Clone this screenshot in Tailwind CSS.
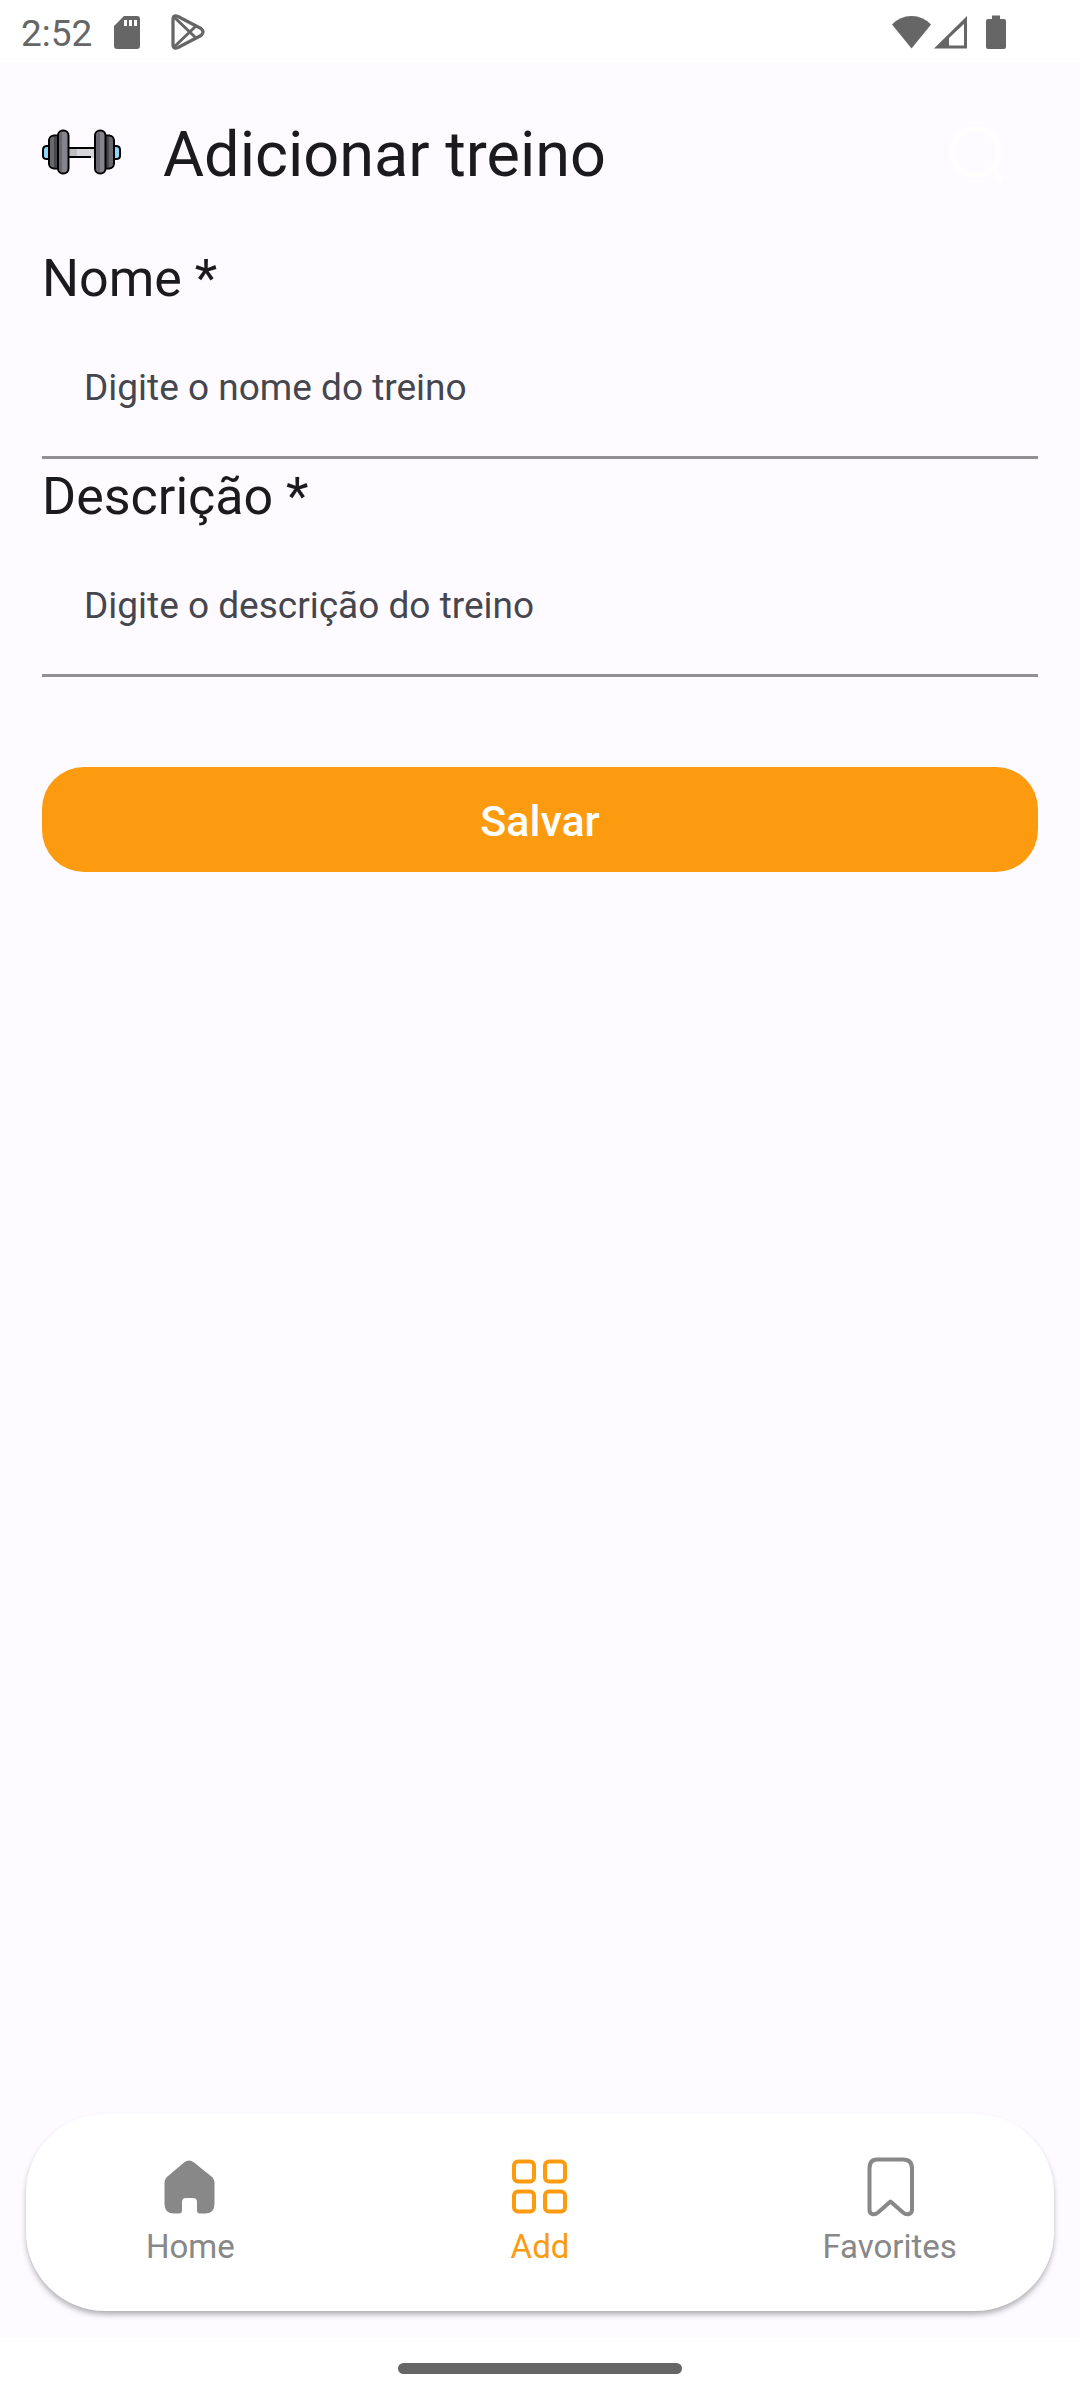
<!DOCTYPE html>
<html lang="pt-BR">
<head>
<meta charset="utf-8">
<meta name="viewport" content="width=device-width, initial-scale=1">
<title>Adicionar treino</title>
<script src="https://cdn.jsdelivr.net/npm/@tailwindcss/browser@4"></script>
</head>
<body class="flex min-h-screen flex-col bg-[#fdfbff] font-[Roboto,sans-serif] text-[#1b1b1f]">

  <!-- System status bar -->
  <div class="flex h-[63px] shrink-0 items-center justify-between bg-white pr-[74px] pl-[21px] text-[#666666]">
    <div class="flex items-center">
      <span class="pt-1 text-[37px] leading-[59px]">2:52</span>
      <svg class="ml-[22px] h-[34px] w-[26px]" viewBox="0 0 26 34" aria-hidden="true">
        <path fill="currentColor" fill-rule="evenodd" d="M10 1H23a3 3 0 0 1 3 3V31a3 3 0 0 1-3 3H3a3 3 0 0 1-3-3V11ZM10 5v6h3V5ZM15 5v6h3V5ZM20 5v6h3V5Z"/>
      </svg>
      <svg class="ml-[31px] h-[36px] w-[34px]" viewBox="0 0 34 36" fill="none" stroke="currentColor" stroke-width="3.2" stroke-linejoin="round" aria-hidden="true">
        <path d="M2 4.500V31.500Q2.500 35.500 7 33.500L30 21.500Q34 18 30 14.500L7 2.500Q2.500 0.500 2 4.500Z"/>
        <path d="M3 3L25 24M3 33L25 12" stroke-width="3"/>
      </svg>
    </div>
    <div class="flex items-center">
      <svg class="h-[34px] w-[39px]" viewBox="0 0 39 34" aria-hidden="true"><path fill="currentColor" d="M0 9.500Q8 1 19.500 1T39 9.500L19.500 33.500Z"/></svg>
      <svg class="ml-[3px] h-[34px] w-[33px]" viewBox="0 0 33 34" aria-hidden="true"><path fill="currentColor" fill-rule="evenodd" d="M0 33.500L33 1V33.500ZM15 23V30.500H30V9Z"/></svg>
      <svg class="ml-[19px] h-[34px] w-[20px]" viewBox="0 0 20 34" aria-hidden="true"><path fill="currentColor" d="M6 0.500H14V4H18a2 2 0 0 1 2 2V32a2 2 0 0 1-2 2H2a2 2 0 0 1-2-2V6a2 2 0 0 1 2-2H6Z"/></svg>
    </div>
  </div>

  <header class="flex items-center px-[42px] pt-[26px]">
    <svg class="h-[46px] w-[79px] shrink-0" viewBox="0 0 79 46" stroke="#000" stroke-width="2" stroke-linejoin="round" aria-hidden="true">
      <path fill="#8fd6f9" d="M8 17H5Q1 17 1 21V27Q1 30 5 30H8ZM71 17H74Q78 17 78 21V27Q78 30 74 30H71Z"/>
      <path d="M26 19H53V28H26Z" fill="#d6d6da"/>
      <path d="M27 20h8v7h-8z" fill="#bdbdc2" stroke="none"/>
      <path d="M49 28H52" stroke="#d6d6da"/>
      <rect x="7" y="6.500" width="16" height="33" rx="5" fill="#69686f"/>
      <path d="M12 8h4v30h-4z" fill="#47464c" stroke="none"/>
      <rect x="56" y="6.500" width="16" height="33" rx="5" fill="#69686f"/>
      <path d="M64 8h3v30h-3z" fill="#47464c" stroke="none"/>
      <rect x="16" y="1.500" width="10.500" height="43" rx="5" fill="#85848c"/>
      <path d="M17 7v32q0 3 3 4V3q-3 1-3 4" fill="#69686f" stroke="none"/>
      <rect x="53" y="1.500" width="10.500" height="43" rx="5" fill="#85848c"/>
      <path d="M54 7v32q0 3 4 4V3q-4 1-4 4" fill="#69686f" stroke="none"/>
    </svg>
    <h1 class="ml-[42px] flex-1 pt-1.5 text-[63px] leading-[84px]">Adicionar treino</h1>
    <button type="button" aria-label="Pesquisar" class="flex size-[126px] items-center justify-center text-white">
      <svg class="size-[63px]" viewBox="0 0 63 63" fill="none" stroke="currentColor" stroke-width="4.500" stroke-linecap="round">
        <circle cx="31.500" cy="31" r="23.500"/><path d="M48 48L57 58"/>
      </svg>
    </button>
  </header>

  <main class="flex-1 px-[42px] pt-[26px]">
    <form>
      <label for="nome" class="block pt-px text-[52px] leading-[74px]">Nome *</label>
      <input id="nome" type="text" placeholder="Digite o nome do treino" class="block h-[143px] w-full border-b-3 border-[#918f94] bg-transparent px-[42px] pt-[3px] text-[37px] outline-none placeholder:text-[#46464f]">
      <label for="descricao" class="block pt-px text-[52px] leading-[74px]">Descrição *</label>
      <input id="descricao" type="text" placeholder="Digite o descrição do treino" class="block h-[143px] w-full border-b-3 border-[#918f94] bg-transparent px-[42px] pt-[3px] text-[37px] outline-none placeholder:text-[#46464f]">
      <button type="button" class="mt-[90px] h-[105px] w-full rounded-[42px] bg-[#fd9b10] pt-1 text-[43px] font-medium text-white">Salvar</button>
    </form>
  </main>

  <nav class="mx-[26px] mb-[26px] grid h-[197px] grid-cols-3 gap-[21px] rounded-[79px] bg-white text-[33px] leading-[42px] text-[#888888] shadow-[0_4px_6px_-1px_rgba(0,0,0,0.35)]">
    <a href="#home" class="flex flex-col items-center gap-2 pt-[41px]">
      <svg class="size-[63px]" viewBox="1 0 63 63" aria-hidden="true"><path fill="currentColor" d="M26 7.500Q31 3.500 36 7.500L53.500 21.500Q56.500 24 56.500 28V49Q56.500 58.500 47 58.500H42Q39 58.500 39 55.500V47Q39 43 35 43H28Q24 43 24 47V55.500Q24 58.500 21 58.500H16Q6.500 58.500 6.500 49V28Q6.500 24 9.500 21.500Z"/></svg>
      <span>Home</span>
    </a>
    <a href="#add" aria-current="page" class="flex flex-col items-center gap-2 pt-[41px] text-[#fd9b10]">
      <svg class="size-[63px]" viewBox="0 0 63 63" fill="none" stroke="currentColor" stroke-width="4" aria-hidden="true"><rect x="6" y="6.500" width="20" height="20" rx="4"/><rect x="37" y="6.500" width="20" height="20" rx="4"/><rect x="6" y="36.500" width="20" height="20" rx="4"/><rect x="37" y="36.500" width="20" height="20" rx="4"/></svg>
      <span>Add</span>
    </a>
    <a href="#favorites" class="flex flex-col items-center gap-2 pt-[41px]">
      <svg class="size-[63px]" viewBox="0 0 63 63" fill="none" stroke="currentColor" stroke-width="4" stroke-linejoin="round" aria-hidden="true"><path d="M19 4.500H45Q54 4.500 54 13.500V55Q54 58 51 59Q48 60 45 57.500L32.500 46.500L20 57.500Q17 60 14 59Q11.500 58 11.500 55V13.500Q11.500 4.500 19 4.500Z"/></svg>
      <span>Favorites</span>
    </a>
  </nav>

  <!-- System gesture bar -->
  <div class="flex h-[63px] shrink-0 items-center justify-center bg-white">
    <div class="h-[11px] w-[284px] rounded-full bg-[#666666]"></div>
  </div>
</body>
</html>
